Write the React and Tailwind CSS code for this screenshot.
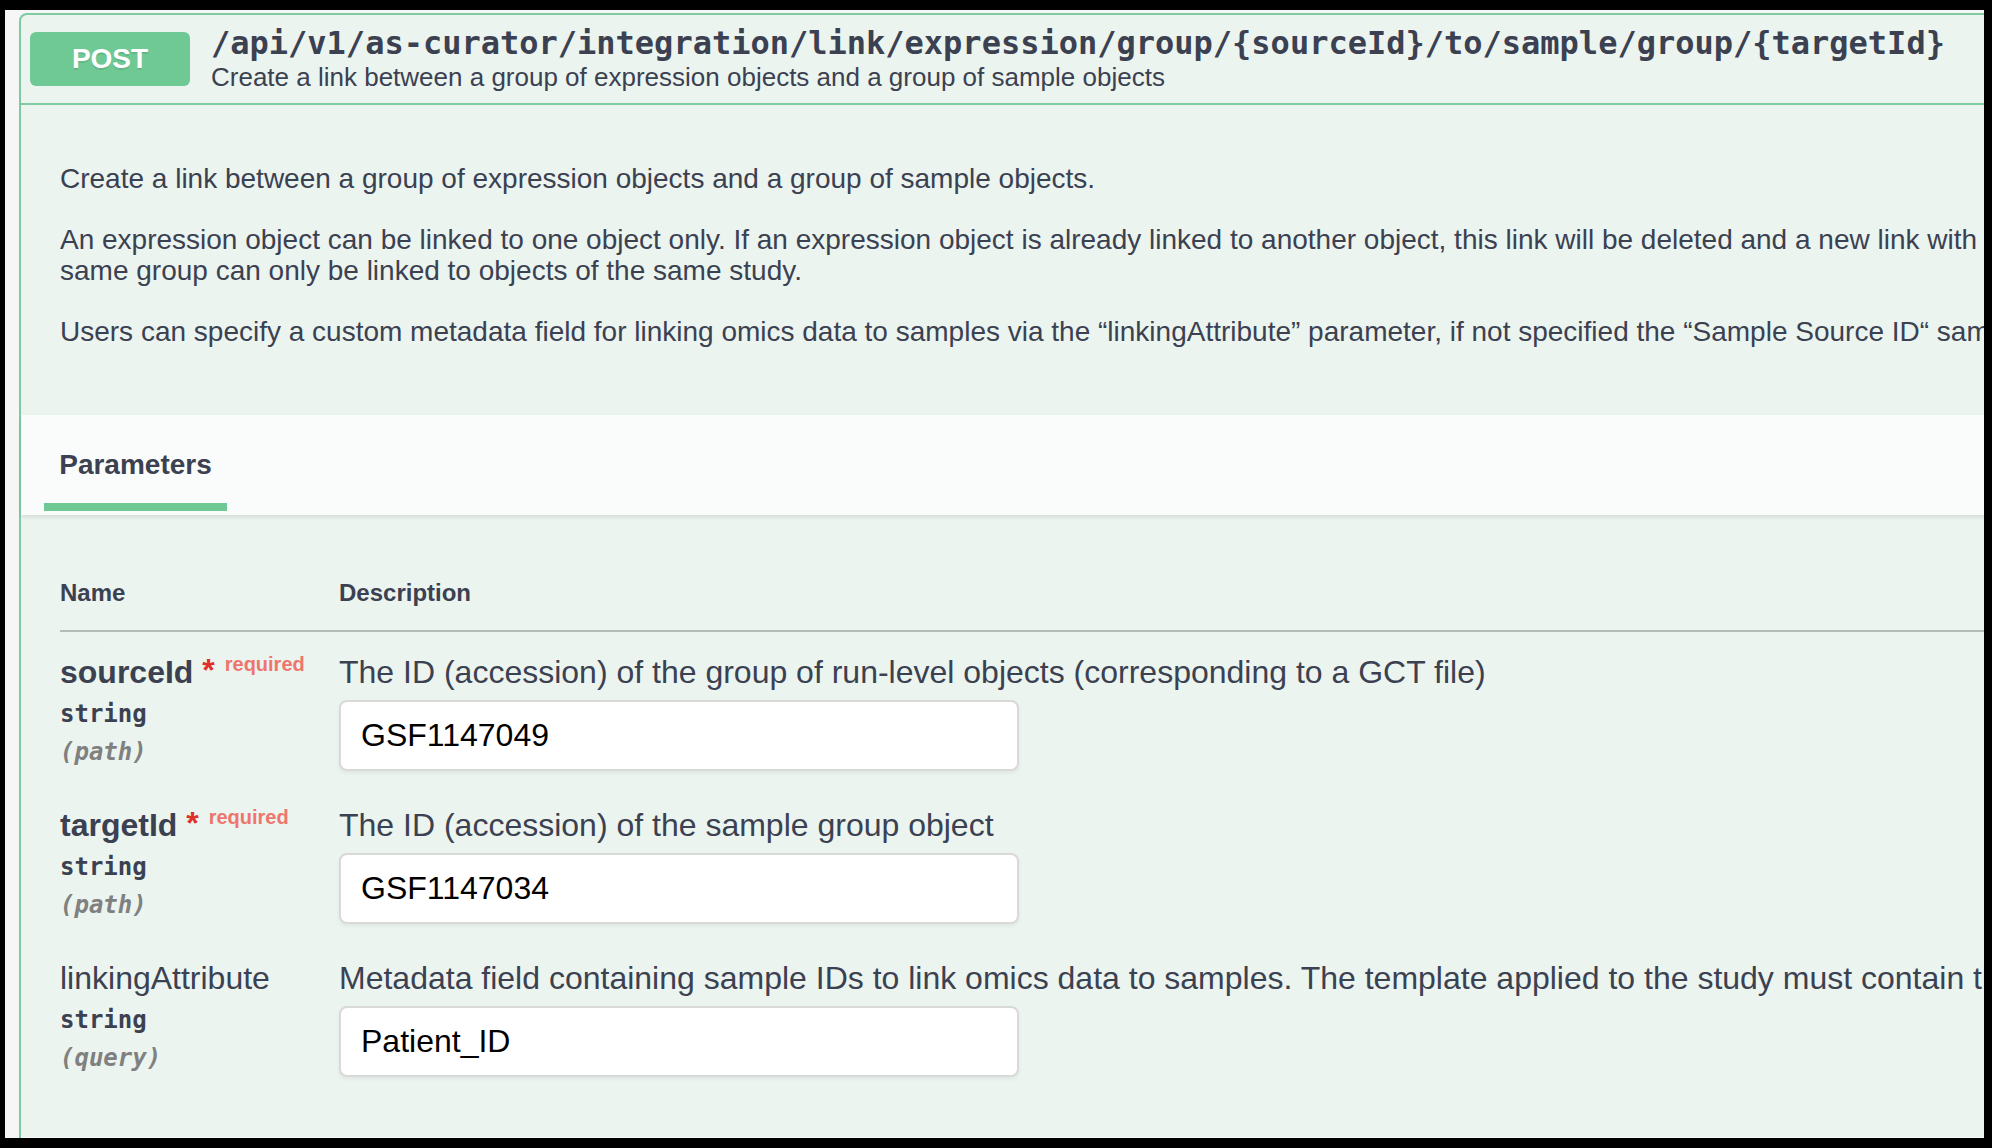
import React from "react";

const sans = "font-['Liberation_Sans',Arial,sans-serif]";
const mono = "font-['DejaVu_Sans_Mono',monospace]";

const params = [
  {
    name: "sourceId",
    required: true,
    type: "string",
    where: "(path)",
    desc: "The ID (accession) of the group of run-level objects (corresponding to a GCT file)",
    value: "GSF1147049",
  },
  {
    name: "targetId",
    required: true,
    type: "string",
    where: "(path)",
    desc: "The ID (accession) of the sample group object",
    value: "GSF1147034",
  },
  {
    name: "linkingAttribute",
    required: false,
    type: "string",
    where: "(query)",
    desc: "Metadata field containing sample IDs to link omics data to samples. The template applied to the study must contain this field.",
    value: "Patient_ID",
  },
];

const ParamRow = ({ p }) => (
  <div className="flex pt-[22px] pb-[14px]">
    <div className="w-[279px] shrink-0">
      <div className="text-[32px] leading-[36px] whitespace-nowrap">
        {p.required ? (
          <>
            <span className="font-bold">{p.name}</span>{" "}
            <span className="relative -top-[2px] font-bold text-[#e0302a]">*</span>
            <span className="relative -top-[12px] text-[20px] leading-none font-bold text-[#ee766d] pl-[10px]">
              required
            </span>
          </>
        ) : (
          <span>{p.name}</span>
        )}
      </div>
      <div className={`${mono} text-[24px] leading-[28px] font-bold pt-[10px]`}>
        {p.type}
      </div>
      <div
        className={`${mono} text-[24px] leading-[28px] font-bold italic text-[#808080] pt-[10px]`}
      >
        {p.where}
      </div>
    </div>
    <div className="flex-1">
      <p className="text-[32px] leading-[36px] whitespace-nowrap">{p.desc}</p>
      <input
        type="text"
        readOnly
        value={p.value}
        className={`${sans} mt-[10px] w-[680px] h-[71px] border-2 border-[#d9d9d9] rounded-[8px] bg-white pl-[20px] text-[32px] text-black outline-none shadow-[0_2px_4px_rgba(0,0,0,0.06)]`}
      />
    </div>
  </div>
);

export default function App() {
  return (
    <div className="w-[1992px] h-[1148px] bg-black pt-[10px] pl-[5px] pr-[8px] pb-[10px]">
      <div className="h-full overflow-hidden bg-[#f6f6f6] pl-[14px] pt-[3px]">
        <div
          className={`${sans} w-[2100px] border-t-2 border-l-2 border-[#7fcba1] rounded-tl-[8px] bg-[#ebf4ef] text-[#3b4151]`}
        >
          {/* summary bar */}
          <div className="h-[90px] flex items-center pl-[9px] border-b-2 border-[#7fcba1]">
            <div className="w-[160px] h-[54px] shrink-0 rounded-[6px] bg-[#6fc995] text-white font-bold text-[28px] flex items-center justify-center [text-shadow:0_2px_0_rgba(0,0,0,0.1)]">
              POST
            </div>
            <div className="ml-[21px] flex flex-col">
              <span className={`${mono} font-bold text-[32px] leading-[36px] whitespace-nowrap`}>
                /api/v1/as-curator/integration/link/expression/group/{"{sourceId}"}/to/sample/group/{"{targetId}"}
              </span>
              <span className="text-[26px] leading-[32px] whitespace-nowrap">
                Create a link between a group of expression objects and a group of sample objects
              </span>
            </div>
          </div>

          {/* description */}
          <div className="pt-[58px] pb-[68px] pl-[39px] flex flex-col gap-[30px] text-[28px] leading-[31px] whitespace-nowrap">
            <p>Create a link between a group of expression objects and a group of sample objects.</p>
            <p>
              An expression object can be linked to one object only. If an expression object is already linked to another object, this link will be deleted and a new link with the new object will be created. Objects of the
              <br />
              same group can only be linked to objects of the same study.
            </p>
            <p>
              Users can specify a custom metadata field for linking omics data to samples via the “linkingAttribute” parameter, if not specified the “Sample Source ID“ sample attribute is used.
            </p>
          </div>

          {/* tab header */}
          <div className="relative z-10 h-[100px] bg-[#fafcfb] shadow-[0_2px_4px_rgba(0,0,0,0.1)] pl-[23px]">
            <div className="w-[183px] flex flex-col items-center pt-[34px]">
              <span className="text-[28px] leading-[32px] font-bold">Parameters</span>
              <span className="mt-[22px] w-full h-[8px] bg-[#6fc995]" />
            </div>
          </div>

          {/* parameters table */}
          <div className="pt-[40px] pl-[39px]">
            <div className="flex pt-[24px] pb-[23px] border-b-2 border-[#b6bcba] text-[24px] leading-[28px] font-bold">
              <div className="w-[279px]">Name</div>
              <div>Description</div>
            </div>
            {params.map((p) => (
              <ParamRow key={p.name} p={p} />
            ))}
          </div>
          <div className="h-[46px]" />
          <div className="h-[60px] bg-[#f8fbf9]" />
        </div>
      </div>
    </div>
  );
}
